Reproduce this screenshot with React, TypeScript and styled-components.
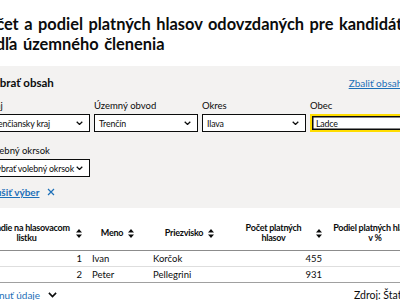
import styled, { createGlobalStyle } from "styled-components";

const GlobalStyle = createGlobalStyle`
  html, body {
    margin: 0;
    padding: 0;
    overflow: hidden;
    background: #ffffff;
  }
  body {
    font-family: Lato, "Liberation Sans", sans-serif;
    color: #0b0c0c;
  }
`;

const Page = styled.div`
  width: 500px;
  margin-left: -23px;
  padding-top: 14px;
`;

const Title = styled.h1`
  margin: 0 0 12px;
  font-size: 16.4px;
  line-height: 20px;
  font-weight: 700;
  word-spacing: 1.5px;
`;

const FilterPanel = styled.section`
  background: #f3f2f1;
  padding: 9px 42px 9px 9px;
`;

const PanelHead = styled.div`
  display: flex;
  align-items: center;
  justify-content: space-between;
  margin-bottom: 9px;
`;

const PanelTitle = styled.h2`
  margin: 0;
  font-size: 11.5px;
  line-height: 16px;
  font-weight: 700;
`;

const Link = styled.a<{ $bold?: boolean }>`
  color: #1d70b8;
  font-size: 10px;
  line-height: 14px;
  font-weight: ${(p) => (p.$bold ? 700 : 400)};
  text-decoration: underline;
  cursor: pointer;
`;

const FieldGrid = styled.div`
  display: grid;
  grid-template-columns: repeat(4, 104px);
  column-gap: 4px;
  row-gap: 13px;
`;

const Field = styled.label`
  display: flex;
  flex-direction: column;
  gap: 2px;
`;

const FieldLabel = styled.span`
  font-size: 9.5px;
  line-height: 12px;
`;

const SelectBox = styled.div<{ $focused?: boolean }>`
  display: flex;
  align-items: center;
  justify-content: space-between;
  height: 18px;
  box-sizing: border-box;
  padding: 0 6px 0 4px;
  background: #fff;
  font-size: 8.8px;
  letter-spacing: -0.15px;
  white-space: nowrap;
  overflow: hidden;
  border: ${(p) => (p.$focused ? "2px solid #ffdd00" : "1px solid #0b0c0c")};
  box-shadow: ${(p) => (p.$focused ? "inset 0 0 0 1.5px #0b0c0c" : "none")};
`;

const ClearRow = styled.div`
  display: flex;
  align-items: center;
  gap: 8px;
  margin-top: 8px;
`;

const Chevron = ({ size = 7 }: { size?: number }) => (
  <svg width={size} height={size * 0.6} viewBox="0 0 10 6" style={{ flexShrink: 0 }}>
    <path d="M1 1l4 4 4-4" fill="none" stroke="#0b0c0c" strokeWidth="1.8" />
  </svg>
);

const SortIcon = () => (
  <svg width="6" height="9" viewBox="0 0 6 9" style={{ flexShrink: 0 }}>
    <path d="M3 0L6 3.5H0z M3 9L6 5.5H0z" fill="#0b0c0c" />
  </svg>
);

const Table = styled.table<{ $w: number }>`
  width: ${(p) => p.$w}px;
  border-collapse: collapse;
  table-layout: fixed;
  margin-top: 10px;
  font-size: 9.5px;
`;

const Th = styled.th<{ $w: number }>`
  width: ${(p) => p.$w - 10}px;
  padding: 0 5px 2px;
  height: 30px;
  font-size: 9px;
  font-weight: 700;
  line-height: 10px;
  letter-spacing: -0.25px;
  border-bottom: 1px solid #8c8c8c;
  vertical-align: middle;
`;

const ThInner = styled.div`
  display: flex;
  align-items: center;
  justify-content: center;
  gap: 5px;
`;

const ThText = styled.span`
  text-align: center;
`;

const Td = styled.td<{ $align?: string; $last?: boolean }>`
  height: 15px;
  padding: 0 5px;
  text-align: ${(p) => p.$align || "left"};
  border-bottom: 1px solid ${(p) => (p.$last ? "#a0a0a0" : "#dedede")};
  white-space: nowrap;
`;

const Footer = styled.div`
  display: flex;
  align-items: center;
  justify-content: space-between;
  margin-top: 5px;
  padding-right: 8px;
  font-size: 10.5px;
`;

const Download = styled.div`
  display: flex;
  align-items: center;
  gap: 8px;
`;

const columns = [
  { label: "Poradie na hlasovacom listku", w: 110, sort: true },
  { label: "Meno", w: 61, sort: true },
  { label: "Priezvisko", w: 83, sort: true },
  { label: "Počet platných hlasov", w: 96, sort: true },
  { label: "Podiel platných hlasov v %", w: 96, sort: false },
];

const tableWidth = columns.reduce((s, c) => s + c.w, 0);

const rows = [
  { poradie: 1, meno: "Ivan", priezvisko: "Korčok", hlasy: 455 },
  { poradie: 2, meno: "Peter", priezvisko: "Pellegrini", hlasy: 931 },
];

export default function App() {
  return (
    <>
      <GlobalStyle />
      <Page>
        <Title>
          Počet a podiel platných hlasov odovzdaných pre kandidáta
          <br />
          podľa územného členenia
        </Title>

        <FilterPanel>
          <PanelHead>
            <PanelTitle>Vybrať obsah</PanelTitle>
            <Link>Zbaliť obsah výberu</Link>
          </PanelHead>
          <FieldGrid>
            <Field>
              <FieldLabel>Kraj</FieldLabel>
              <SelectBox>
                Trenčiansky kraj <Chevron />
              </SelectBox>
            </Field>
            <Field>
              <FieldLabel>Územný obvod</FieldLabel>
              <SelectBox>
                Trenčín <Chevron />
              </SelectBox>
            </Field>
            <Field>
              <FieldLabel>Okres</FieldLabel>
              <SelectBox>
                Ilava <Chevron />
              </SelectBox>
            </Field>
            <Field>
              <FieldLabel>Obec</FieldLabel>
              <SelectBox $focused>Ladce</SelectBox>
            </Field>
            <Field>
              <FieldLabel>Volebný okrsok</FieldLabel>
              <SelectBox>
                Vybrať volebný okrsok <Chevron />
              </SelectBox>
            </Field>
          </FieldGrid>
          <ClearRow>
            <Link $bold>Zrušiť výber</Link>
            <svg width="8" height="8" viewBox="0 0 8 8">
              <path d="M1 1l6 6M7 1L1 7" stroke="#1d70b8" strokeWidth="1.2" />
            </svg>
          </ClearRow>
        </FilterPanel>

        <Table $w={tableWidth}>
          <thead>
            <tr>
              {columns.map((c) => (
                <Th key={c.label} $w={c.w}>
                  <ThInner>
                    <ThText>{c.label}</ThText>
                    {c.sort && <SortIcon />}
                  </ThInner>
                </Th>
              ))}
            </tr>
          </thead>
          <tbody>
            {rows.map((r, i) => {
              const last = i === rows.length - 1;
              return (
                <tr key={r.poradie}>
                  <Td $align="right" $last={last}>{r.poradie}</Td>
                  <Td $last={last}>{r.meno}</Td>
                  <Td $last={last}>{r.priezvisko}</Td>
                  <Td $align="right" $last={last}>{r.hlasy}</Td>
                  <Td $align="right" $last={last}></Td>
                </tr>
              );
            })}
          </tbody>
        </Table>

        <Footer>
          <Download>
            <Link>Stiahnuť údaje</Link>
            <Chevron size={9} />
          </Download>
          <span>Zdroj: Štatistický úrad SR</span>
        </Footer>
      </Page>
    </>
  );
}
